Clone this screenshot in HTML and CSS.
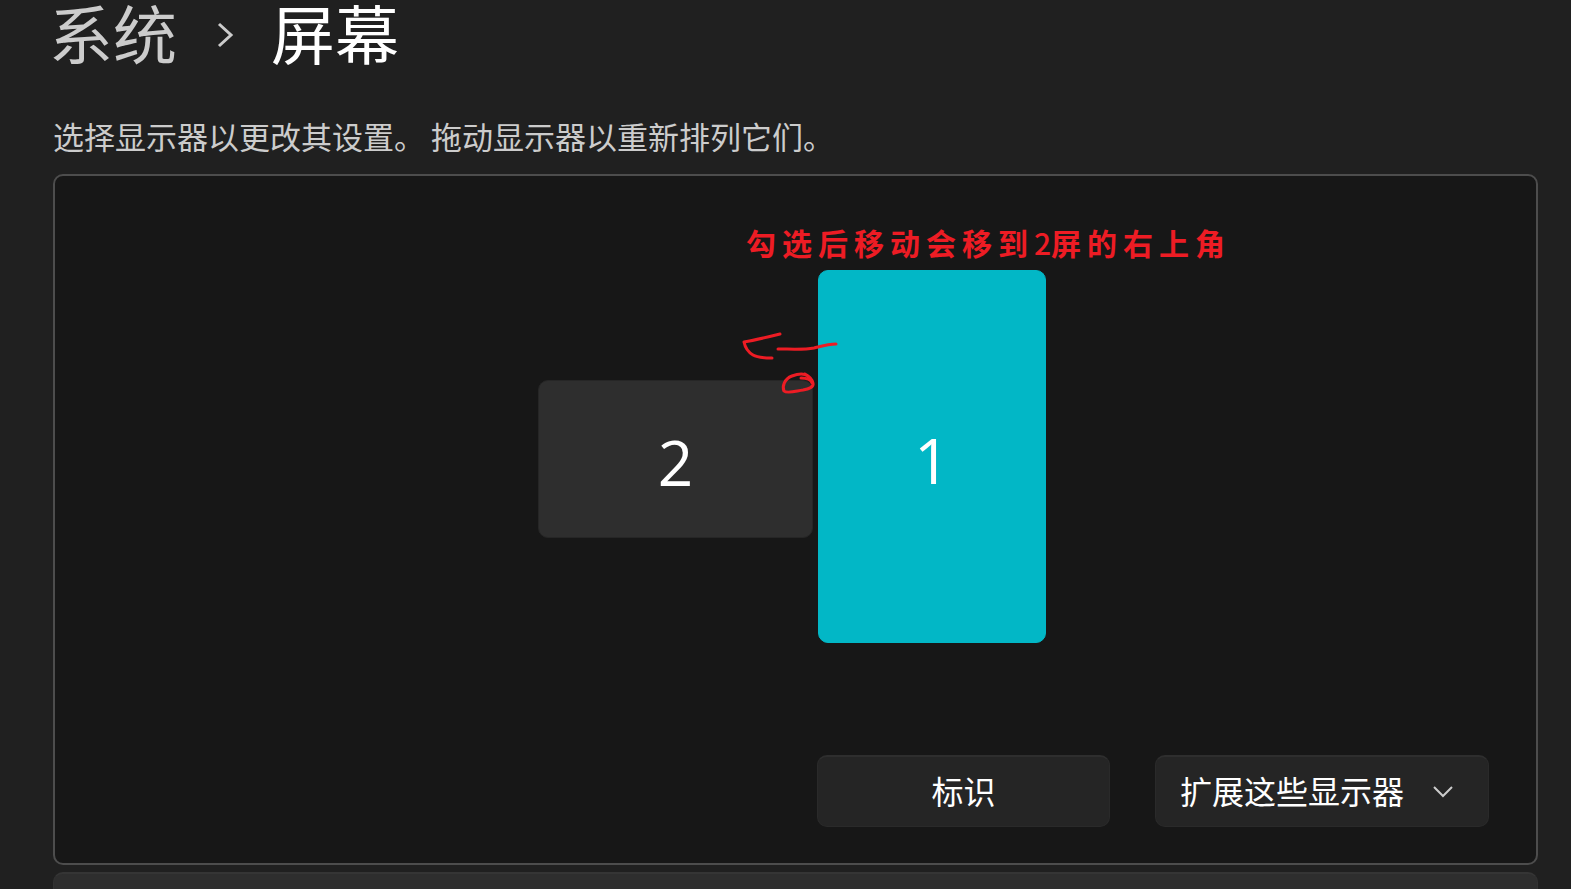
FILE: index.html
```html
<!DOCTYPE html>
<html lang="zh-CN">
<head>
<meta charset="utf-8">
<title>系统 › 屏幕</title>
<link rel="stylesheet" href="styles.css">
</head>
<body>
<main class="page">
  <nav class="breadcrumb" aria-label="导航路径">
    <a class="crumb" href="#system">系统</a>
    <svg class="crumb-arrow" viewBox="0 0 20 26" aria-hidden="true"><path d="M5 2 17 13 5 24"/></svg>
    <h1 class="crumb crumb-current">屏幕</h1>
  </nav>
  <p class="hint"><span>选择显示器以更改其设置。</span><span>拖动显示器以重新排列它们。</span></p>

  <section class="panel">
    <div class="arrangement">
      <button class="monitor monitor-two" type="button">2</button>
      <button class="monitor monitor-one" type="button">1</button>
      <p class="note">勾选后移动会移到<span class="note-digit">2</span>屏的右上角</p>
      <svg class="scribble" viewBox="0 0 104 70" aria-hidden="true">
        <path d="M42 6C30 9 18 12 6 14C7 19 10 24 15 27C20 30 27 30 34 30"/>
        <path d="M40 21C52 21 66 22 76 20C84 18 90 16 98 16"/>
        <path d="M63 50C69 50 73 51 74 55M70 48C66 45 59 46 54 48C46 51 44 59 46 63C49 66 58 63 65 62C71 61 76 59 75 55C74 51 71 48 67 46"/>
      </svg>
    </div>
    <div class="actions">
      <button class="control identify" type="button">标识</button>
      <div class="mode">
        <select class="control mode-select" aria-label="多显示器模式">
          <option>扩展这些显示器</option>
        </select>
        <svg class="mode-arrow" viewBox="0 0 20 12" aria-hidden="true"><path d="M1 1 10 10 19 1"/></svg>
      </div>
    </div>
  </section>
  <section class="next-card"></section>
</main>
</body>
</html>
```
FILE: styles.css
```css
* {
  box-sizing: border-box;
}

body {
  margin: 0;
  background: #202020;
  color: #fff;
  font-family: "Noto Sans CJK SC", sans-serif;
}

.page {
  display: flex;
  flex-direction: column;
  min-height: 100vh;
  padding: 0 33px 0 53px;
}

.breadcrumb {
  display: flex;
  align-items: flex-end;
  gap: 37px;
  margin-left: -4px;
}

.crumb {
  margin: 0;
  font-size: 64px;
  font-weight: 400;
  line-height: 62px;
  color: #ccc;
  text-decoration: none;
}

.crumb-current {
  color: #fff;
}

.crumb-arrow {
  width: 20px;
  height: 26px;
  margin-bottom: 14px;
  fill: none;
  stroke: #ccc;
  stroke-width: 3;
}

.hint {
  display: flex;
  gap: 6px;
  margin: 54px 0 18px;
  font-size: 31px;
  line-height: 40px;
  color: #ccc;
}

.panel {
  display: flex;
  flex-direction: column;
  gap: 112px;
  padding: 94px 47px 36px;
  border: 2px solid #4d4d4d;
  border-radius: 10px;
  background: #171717;
}

.arrangement {
  position: relative;
  align-self: center;
  width: 515px;
  height: 373px;
}

.monitor {
  position: absolute;
  padding: 6px 0 0;
  border: 1px solid #262626;
  border-radius: 10px;
  background: #2e2e2e;
  color: #fff;
  font-family: "Open Sans", sans-serif;
  font-size: 62px;
}

.monitor-two {
  left: 0;
  top: 110px;
  width: 275px;
  height: 158px;
}

.monitor-one {
  left: 280px;
  top: 0;
  width: 228px;
  height: 373px;
  border-color: #02b7c6;
  background: #02b7c6;
}

.note {
  position: absolute;
  left: 208px;
  top: -48px;
  margin: 0;
  font-size: 30px;
  font-weight: 700;
  line-height: 40px;
  letter-spacing: 6px;
  white-space: nowrap;
  color: #ed1c24;
}

.note-digit {
  font-weight: 500;
  letter-spacing: 0;
}

.scribble {
  position: absolute;
  left: 200px;
  top: 58px;
  width: 104px;
  height: 70px;
  fill: none;
  stroke: #ed1c24;
  stroke-width: 3;
  stroke-linecap: round;
  stroke-linejoin: round;
  pointer-events: none;
}

.actions {
  display: flex;
  justify-content: flex-end;
  align-items: center;
  gap: 45px;
}

.control {
  height: 72px;
  padding: 0 0 4px;
  border: 1px solid #2a2a2a;
  border-top: 2px solid #2e2e2e;
  border-radius: 10px;
  background: #252525;
  color: #fff;
  font-family: inherit;
  font-size: 32px;
}

.identify {
  width: 293px;
}

.mode {
  position: relative;
  width: 334px;
}

.mode-select {
  display: block;
  width: 100%;
  padding: 0 80px 4px 24px;
  appearance: none;
}

.mode-arrow {
  position: absolute;
  right: 36px;
  top: 31px;
  width: 20px;
  height: 12px;
  fill: none;
  stroke: #ccc;
  stroke-width: 2;
  pointer-events: none;
}

.next-card {
  flex: 1;
  min-height: 17px;
  margin-top: 7px;
  border: 1px solid #323232;
  border-top: 2px solid #353535;
  border-bottom: 0;
  border-radius: 10px 10px 0 0;
  background: #2e2e2e;
}
```
